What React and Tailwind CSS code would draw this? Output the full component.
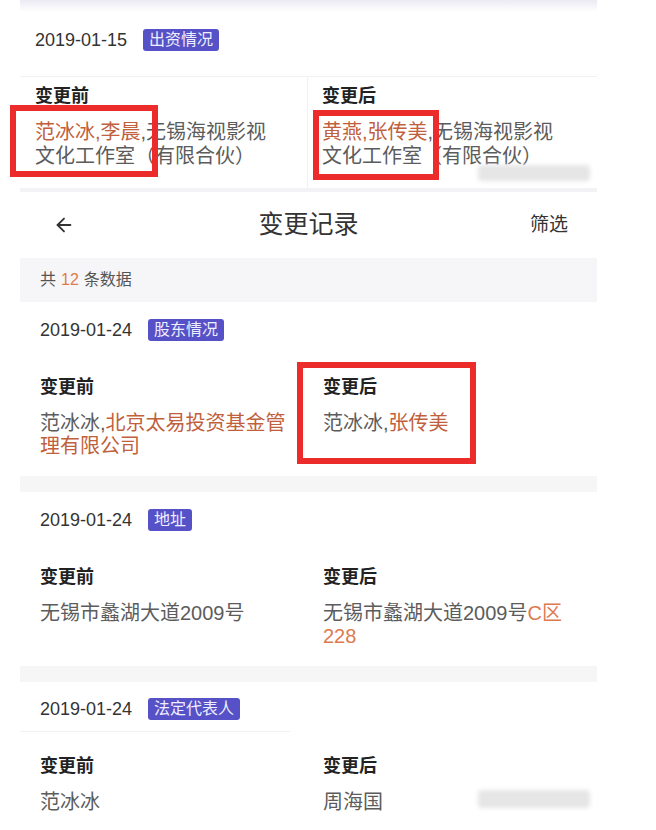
import { ArrowLeft } from "lucide-react";

const hl = "text-[#c0603d]";

function Badge({ children }) {
  return (
    <span className="ml-[16px] inline-flex h-[22px] items-center rounded-[3px] bg-[#5651c6] px-[6px] text-[16px] leading-none text-[#eeeeff]">
      {children}
    </span>
  );
}

function Card({ date, tag, before, after, line, last }) {
  return (
    <div className={last ? "px-[20px] pt-[16px]" : "px-[20px] pt-[17px] pb-[18px]"}>
      <div className="flex h-[22px] items-center">
        <span className="text-[18px] text-[#333]">{date}</span>
        <Badge>{tag}</Badge>
      </div>
      {line && <div className="-ml-[20px] mt-[11px] w-[270px] border-t border-[#f1f1f1]" />}
      <div className={line ? "mt-[22px] grid grid-cols-[283px_1fr]" : "mt-[34px] grid grid-cols-[283px_1fr]"}>
        <div>
          <div className="text-[18px] font-bold leading-[24px] text-[#222]">变更前</div>
          <div className="mt-[13px] text-[20px] leading-[23px] text-[#5c5c5c]">{before}</div>
        </div>
        <div>
          <div className="text-[18px] font-bold leading-[24px] text-[#222]">变更后</div>
          <div className="mt-[13px] text-[20px] leading-[23px] text-[#5c5c5c]">{after}</div>
        </div>
      </div>
    </div>
  );
}

export default function App() {
  return (
    <div
      className="relative h-[830px] w-[656px] overflow-hidden bg-white"
      style={{ fontFamily: '"Liberation Sans", "Noto Sans CJK SC", sans-serif' }}
    >
      <div className="ml-[20px] w-[577px]">
        {/* earlier screenshot */}
        <div className="h-[188px]">
          <div className="h-[12px] bg-gradient-to-b from-[#eceaf3] to-white" />
          <div className="mt-[17px] flex h-[22px] items-center pl-[15px]">
            <span className="text-[18px] text-[#333]">2019-01-15</span>
            <Badge>出资情况</Badge>
          </div>
          <div className="mt-[25px] grid grid-cols-[288px_1fr] border-t border-[#f1f1f1]">
            <div className="h-[111px] border-r border-[#f1f1f1] pl-[15px] pt-[7px]">
              <div className="text-[18px] font-bold leading-[24px] text-[#222]">变更前</div>
              <div className="mt-[12px] text-[20px] leading-[24px] text-[#5c5c5c]">
                <span className={hl}>范冰冰,李晨</span>,无锡海视影视
                <br />
                文化工作室（有限合伙）
              </div>
            </div>
            <div className="pl-[14px] pt-[7px]">
              <div className="text-[18px] font-bold leading-[24px] text-[#222]">变更后</div>
              <div className="mt-[12px] text-[20px] leading-[24px] text-[#5c5c5c]">
                <span className={hl}>黄燕,张传美</span>,无锡海视影视
                <br />
                文化工作室（有限合伙）
              </div>
            </div>
          </div>
        </div>
        <div className="h-[4px] bg-[#f3f3f5]" />

        {/* nav bar */}
        <div className="grid h-[66px] grid-cols-[1fr_auto_1fr] items-center">
          <div className="pl-[33px]">
            <ArrowLeft size={22} strokeWidth={2} color="#333" />
          </div>
          <div className="text-[25px] text-[#333]">变更记录</div>
          <div className="justify-self-end pr-[29px] text-[19px] text-[#333]">筛选</div>
        </div>

        <div className="flex h-[44px] items-center bg-[#f6f6f8] pl-[20px] text-[16px] text-[#555]">
          共<span className="mx-[5px] text-[#e07a4a]">12</span>条数据
        </div>

        <Card
          date="2019-01-24"
          tag="股东情况"
          before={
            <>
              范冰冰,<span className={hl}>北京太易投资基金管</span>
              <br />
              <span className={hl}>理有限公司</span>
            </>
          }
          after={
            <>
              范冰冰,<span className={hl}>张传美</span>
            </>
          }
        />
        <div className="h-[16px] bg-[#f6f6f7]" />
        <Card
          date="2019-01-24"
          tag="地址"
          before="无锡市蠡湖大道2009号"
          after={
            <>
              无锡市蠡湖大道2009号<span className="text-[#dd7a50]">C区</span>
              <br />
              <span className="text-[#dd7a50]">228</span>
            </>
          }
        />
        <div className="h-[16px] bg-[#f6f6f7]" />
        <Card date="2019-01-24" tag="法定代表人" before="范冰冰" after="周海国" line last />
      </div>

      {/* blurred watermarks */}
      <div className="absolute left-[478px] top-[165px] h-[16px] w-[112px] rounded-[4px] bg-[#e6e6e6] blur-[2px]" />
      <div className="absolute left-[478px] top-[790px] h-[18px] w-[112px] rounded-[4px] bg-[#e6e6e6] blur-[2px]" />

      {/* red highlight boxes */}
      <div className="absolute left-[10px] top-[105px] h-[72px] w-[148px] border-[6px] border-[#ec2b2b]" />
      <div className="absolute left-[313px] top-[110px] h-[70px] w-[126px] border-[6px] border-[#ec2b2b]" />
      <div className="absolute left-[297px] top-[362px] h-[102px] w-[179px] border-[6px] border-[#ec2b2b]" />
    </div>
  );
}
